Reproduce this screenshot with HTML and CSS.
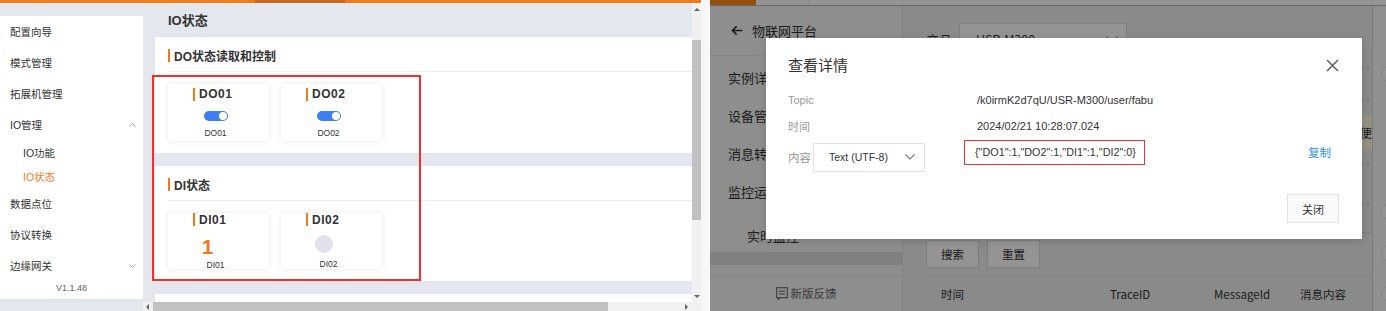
FILE: index.html
```html
<!DOCTYPE html>
<html lang="zh-CN">
<head>
    <meta charset="UTF-8">
    <meta name="viewport" content="width=device-width, initial-scale=1.0">
    <title>IO状态 / 查看详情</title>
    <link rel="stylesheet" href="styles.css">
</head>
<body>
<div class="screen">

    <!-- device web page -->
    <section class="device">
        <div class="device-top"></div>
        <div class="device-body">
            <nav class="device-menu">
                <div class="menu-item">配置向导</div>
                <div class="menu-item">模式管理</div>
                <div class="menu-item">拓展机管理</div>
                <div class="menu-item">IO管理
                    <svg class="caret" width="7" height="4" viewBox="0 0 7 4"><path d="M0.5 3.5L3.5 0.6l3 2.9" fill="none" stroke="#999" stroke-width="0.9"/></svg>
                </div>
                <div class="menu-sub">IO功能</div>
                <div class="menu-sub active">IO状态</div>
                <div class="menu-item">数据点位</div>
                <div class="menu-item">协议转换</div>
                <div class="menu-item">边缘网关
                    <svg class="caret" width="7" height="4" viewBox="0 0 7 4"><path d="M0.5 0.5L3.5 3.4l3-2.9" fill="none" stroke="#999" stroke-width="0.9"/></svg>
                </div>
                <div class="version">V1.1.48</div>
            </nav>

            <div class="device-main">
                <div class="device-view">
                    <div class="device-content">
                        <h2 class="page-title">IO状态</h2>

                        <div class="panel">
                            <div class="panel-head">DO状态读取和控制</div>
                            <div class="io-row">
                                <div class="io-card">
                                    <div class="io-name">DO01</div>
                                    <span class="switch"><span class="knob"></span></span>
                                    <div class="io-label">DO01</div>
                                </div>
                                <div class="io-card">
                                    <div class="io-name">DO02</div>
                                    <span class="switch"><span class="knob"></span></span>
                                    <div class="io-label">DO02</div>
                                </div>
                            </div>
                        </div>

                        <div class="panel">
                            <div class="panel-head">DI状态</div>
                            <div class="io-row">
                                <div class="io-card di">
                                    <div class="io-name">DI01</div>
                                    <div class="io-value"><span class="io-num">1</span></div>
                                    <div class="io-label">DI01</div>
                                </div>
                                <div class="io-card di">
                                    <div class="io-name">DI02</div>
                                    <div class="io-value"><span class="dot"></span></div>
                                    <div class="io-label">DI02</div>
                                </div>
                            </div>
                        </div>

                        <div class="panel filler"></div>
                    </div>
                    <div class="vscroll">
                        <span class="tri up"></span>
                        <span class="vthumb"></span>
                        <span class="tri down"></span>
                    </div>
                </div>
                <div class="hscroll">
                    <span class="tri left"></span>
                    <span class="hthumb"></span>
                    <span class="tri right"></span>
                </div>
            </div>
        </div>
        <div class="mark"></div>
    </section>

    <div class="seam"></div>

    <!-- cloud platform with detail dialog -->
    <section class="cloud">
        <div class="cloud-top"><span class="brand"></span><span class="tab"></span></div>
        <div class="cloud-body">
            <aside class="cloud-aside">
                <div class="aside-head">
                    <svg width="12" height="11" viewBox="0 0 12 11"><path d="M11.5 5.5H1.8M5.6 1.4L1.5 5.5l4.1 4.1" fill="none" stroke="#333" stroke-width="1.7"/></svg>
                    <span>物联网平台</span>
                </div>
                <div class="aside-menu">
                    <div class="aside-item">实例详情</div>
                    <div class="aside-item">设备管理</div>
                    <div class="aside-item">消息转发</div>
                    <div class="aside-item">监控运维</div>
                    <div class="aside-item sub">实时监控</div>
                </div>
                <div class="aside-band"></div>
                <div class="aside-foot">
                    <svg width="12" height="13" viewBox="0 0 12 13"><rect x="0.7" y="0.7" width="10.6" height="10" fill="none" stroke="#666" stroke-width="1.1"/><path d="M3 4.2h6M3 7h6M2 10.7v1.8l2-1.8" fill="none" stroke="#666" stroke-width="1.1"/></svg>
                    <span>新版反馈</span>
                </div>
            </aside>

            <div class="cloud-main">
                <div class="filter">
                    <span class="filter-label">产品:</span>
                    <div class="filter-select">
                        <span>USR-M300</span>
                        <svg width="12" height="7" viewBox="0 0 12 7"><path d="M0.5 0.5L6 6l5.5-5.5" fill="none" stroke="#888" stroke-width="1.2"/></svg>
                    </div>
                </div>
                <div class="sheet">
                    <div class="sheet-row r1"></div>
                    <div class="sheet-row r2"></div>
                    <div class="sheet-row r3"><div class="tip">以便</div></div>
                    <div class="sheet-row r4"></div>
                    <div class="sheet-row r5"></div>
                </div>
                <div class="actions">
                    <button class="btn">搜索</button>
                    <button class="btn">重置</button>
                </div>
                <div class="table-head">
                    <span>时间</span>
                    <span>TraceID</span>
                    <span>MessageId</span>
                    <span>消息内容</span>
                </div>
            </div>

            <div class="cloud-edge">
                <span class="float-btn first"></span>
                <span class="float-btn"></span>
                <span class="float-btn"></span>
                <span class="float-btn"></span>
            </div>
        </div>

        <div class="mask"></div>

        <div class="dialog">
            <div class="dialog-head">
                <h3 class="dialog-title">查看详情</h3>
                <svg class="dialog-close" width="13" height="13" viewBox="0 0 13 13"><path d="M1 1l11 11M12 1L1 12" stroke="#666" stroke-width="1.6"/></svg>
            </div>
            <div class="detail-row">
                <span class="detail-label">Topic</span>
                <span>/k0irmK2d7qU/USR-M300/user/fabu</span>
            </div>
            <div class="detail-row">
                <span class="detail-label">时间</span>
                <span>2024/02/21 10:28:07.024</span>
            </div>
            <div class="detail-row content">
                <span class="detail-label short">内容</span>
                <div class="codec">
                    <span>Text (UTF-8)</span>
                    <svg width="10" height="6" viewBox="0 0 10 6"><path d="M0.5 0.5L5 5l4.5-4.5" fill="none" stroke="#777" stroke-width="1.1"/></svg>
                </div>
                <span class="payload">{"DO1":1,"DO2":1,"DI1":1,"DI2":0}</span>
                <a class="copy">复制</a>
            </div>
            <div class="dialog-foot">
                <button class="btn-close">关闭</button>
            </div>
        </div>
    </section>

</div>
</body>
</html>
```

FILE: styles.css
```css
* {
    box-sizing: border-box;
}
body {
    margin: 0;
    width: 1386px;
    height: 311px;
    overflow: hidden;
    background: #f7f7f7;
}
.screen {
    display: flex;
    height: 311px;
}

/* ---------- device page ---------- */
.device {
    position: relative;
    width: 701px;
    height: 311px;
    background: #e4e7ee;
    font-family: "Liberation Sans", "Noto Sans CJK SC", sans-serif;
    color: #333;
}
.device-top {
    height: 3px;
    background: linear-gradient(to right, #f07b1f 255px, #c4691f 255px, #c4691f 345px, #f07b1f 345px);
}
.device-body {
    display: flex;
    height: 308px;
}
.device-menu {
    width: 143px;
    height: 283px;
    margin-top: 13px;
    background: #fff;
    display: flex;
    flex-direction: column;
    font-size: 10.5px;
}
.menu-item {
    height: 31px;
    display: flex;
    align-items: center;
    justify-content: space-between;
    padding: 0 7px 0 10px;
}
.menu-sub {
    height: 24px;
    display: flex;
    align-items: center;
    padding-left: 23px;
}
.menu-sub.active {
    color: #f07b1f;
}
.version {
    line-height: 14px;
    text-align: center;
    font-size: 9px;
    color: #666;
}

.device-main {
    width: 558px;
    display: flex;
    flex-direction: column;
}
.device-view {
    height: 299px;
    display: flex;
}
.device-content {
    flex: 1;
    overflow: hidden;
    padding-left: 12px;
}
.page-title {
    margin: 0;
    height: 34px;
    padding: 2px 0 0 13px;
    font-size: 13px;
    font-weight: bold;
    line-height: 32px;
}
.panel {
    background: #fff;
    margin-bottom: 13px;
}
.panel.filler {
    height: 20px;
}
.panel-head {
    margin-left: 13px;
    height: 35px;
    padding-top: 3px;
    border-bottom: 1px solid #eeeeee;
    display: flex;
    align-items: center;
    font-size: 12px;
    font-weight: bold;
}
.panel-head::before,
.io-name::before {
    content: "";
    width: 2px;
    height: 13px;
    margin-right: 4px;
    background: #f07b1f;
}
.io-row {
    display: flex;
    gap: 12px;
    padding: 12px 0 12px 13px;
}
.io-card {
    width: 101px;
    height: 57px;
    background: #fff;
    box-shadow: 0 0 6px rgba(0, 0, 0, 0.09);
    display: flex;
    flex-direction: column;
    align-items: center;
    padding-right: 6px;
}
.io-card.di {
    height: 56px;
}
.io-name {
    align-self: flex-start;
    margin: 3px 0 0 25px;
    display: flex;
    align-items: center;
    line-height: 14px;
    font-size: 12px;
    font-weight: bold;
    letter-spacing: 0.5px;
}
.io-card.di .io-name {
    margin-top: 0;
    line-height: 12px;
}
.switch {
    width: 24px;
    height: 10px;
    margin-top: 10px;
    padding: 1px;
    border-radius: 5px;
    background: #3f7ff4;
    display: flex;
    justify-content: flex-end;
}
.knob {
    width: 8px;
    height: 8px;
    border-radius: 50%;
    background: #fff;
}
.io-label {
    margin-top: 7px;
    font-size: 8.5px;
    line-height: 10px;
}
.io-card.di .io-label {
    margin-top: 3px;
}
.io-value {
    height: 20px;
    margin-top: 11px;
    display: flex;
    justify-content: center;
}
.io-num {
    margin-right: 16px;
    font-size: 21px;
    line-height: 20px;
    font-weight: bold;
    color: #f07b1f;
}
.dot {
    width: 18px;
    height: 18px;
    margin: -2px 9px 0 0;
    border-radius: 50%;
    background: #e1e1eb;
}

.vscroll {
    width: 9px;
    background: #f1f1f1;
    display: flex;
    flex-direction: column;
    align-items: center;
}
.vthumb {
    width: 9px;
    height: 180px;
    margin-top: 29px;
    background: #c1c1c1;
}
.hscroll {
    height: 9px;
    background: #f1f1f1;
    display: flex;
    align-items: center;
    padding-left: 3px;
}
.hthumb {
    width: 455px;
    height: 9px;
    margin-left: 4px;
    background: #c1c1c1;
}
.tri {
    width: 0;
    height: 0;
    border: 3px solid transparent;
}
.tri.up {
    margin-top: 5px;
    border-top-width: 0;
    border-bottom-color: #666;
}
.tri.down {
    margin-top: auto;
    margin-bottom: 4px;
    border-bottom-width: 0;
    border-top-color: #666;
}
.tri.left {
    border-left-width: 0;
    border-right-color: #666;
}
.tri.right {
    margin-left: 77px;
    border-right-width: 0;
    border-left-color: #666;
}
.mark {
    position: absolute;
    left: 152px;
    top: 75px;
    width: 269px;
    height: 206px;
    border: 2px solid #f62d2d;
}

.seam {
    width: 9px;
    background: #f7f7f7;
}

/* ---------- cloud page ---------- */
.cloud {
    position: relative;
    width: 676px;
    height: 311px;
    overflow: hidden;
    background: #eeeeee;
    font-family: "Noto Sans CJK SC", sans-serif;
    color: #333;
}
.cloud-top {
    height: 6px;
    display: flex;
    background: #fff;
    border-bottom: 1px solid #b5b5b5;
}
.brand {
    width: 46px;
    background: #ff8a1c;
}
.tab {
    width: 54px;
    border-right: 1px solid #e6e6e6;
}
.cloud-body {
    display: flex;
    height: 305px;
}
.cloud-aside {
    width: 193px;
    background: #f4f4f4;
    border-right: 1px solid #e2e2e2;
    display: flex;
    flex-direction: column;
}
.aside-head {
    height: 53px;
    padding-left: 21px;
    border-bottom: 1px solid #e6e6e6;
    display: flex;
    align-items: center;
    gap: 9px;
    font-size: 13px;
}
.aside-menu {
    padding-top: 3px;
    font-size: 13px;
}
.aside-item {
    height: 38px;
    line-height: 38px;
    padding-left: 18px;
    white-space: nowrap;
}
.aside-item.sub {
    height: 44px;
    padding: 6px 0 0 37px;
}
.aside-band {
    height: 13px;
    margin-top: -3px;
    background: #dcdcdc;
}
.aside-foot {
    margin-top: 10px;
    height: 38px;
    border-top: 1px solid #e2e2e2;
    display: flex;
    align-items: center;
    justify-content: center;
    gap: 3px;
    font-size: 11.5px;
    color: #666;
}

.cloud-main {
    width: 469px;
    padding: 17px 0 0 23px;
    display: flex;
    flex-direction: column;
}
.filter {
    height: 32px;
    display: flex;
    align-items: center;
    font-size: 13px;
}
.filter-label {
    width: 33px;
}
.filter-select {
    width: 168px;
    height: 32px;
    padding: 0 8px 0 16px;
    border: 1px solid #d9d9d9;
    background: #fff;
    display: flex;
    align-items: center;
    justify-content: space-between;
    font-size: 12.5px;
}
.sheet-row {
    border-bottom: 1px solid #d6d6d6;
}
.sheet-row.r1 { height: 14px; }
.sheet-row.r2 { height: 32px; }
.sheet-row.r3 { height: 63px; padding-top: 15px; }
.sheet-row.r4 { height: 40px; }
.sheet-row.r5 { height: 29px; }
.tip {
    height: 34px;
    line-height: 34px;
    background: #fff8e1;
    text-align: right;
    white-space: nowrap;
    overflow: hidden;
    font-size: 12.5px;
}
.actions {
    margin-top: 7px;
    display: flex;
    gap: 8px;
}
.btn {
    width: 53px;
    height: 28px;
    border: 1px solid #d9d9d9;
    background: #fff;
    font-family: inherit;
    font-size: 11.5px;
    color: #333;
    padding: 0;
}
.table-head {
    margin-top: 8px;
    height: 34px;
    border-top: 1px solid #dedede;
    padding-left: 15px;
    display: grid;
    grid-template-columns: 169px 104px 86px 1fr;
    align-items: center;
    font-size: 11.5px;
}
.cloud-edge {
    width: 14px;
    background: #f8f8f8;
    border-left: 1px solid #d4d4d4;
    display: flex;
    flex-direction: column;
    padding-left: 8px;
}
.float-btn {
    width: 16px;
    height: 16px;
    border-radius: 50%;
    background: #fdfdfd;
    border: 1px solid #e2e2e2;
    margin-top: 25px;
}
.float-btn.first {
    margin-top: 60px;
    margin-bottom: 97px;
}

.mask {
    position: absolute;
    inset: 0;
    background: rgba(0, 0, 0, 0.42);
}
.dialog {
    position: absolute;
    left: 56px;
    top: 38px;
    width: 596px;
    height: 201px;
    padding: 0 23px 0 22px;
    background: #fff;
    box-shadow: 0 2px 8px rgba(0, 0, 0, 0.15);
    font-family: "Liberation Sans", "Noto Sans CJK SC", sans-serif;
    font-size: 11px;
}
.dialog-head {
    height: 49px;
    padding-top: 16px;
    display: flex;
    justify-content: space-between;
    align-items: flex-start;
    font-family: "Noto Sans CJK SC", sans-serif;
}
.dialog-title {
    margin: 0;
    font-size: 15px;
    font-weight: normal;
    line-height: 22px;
}
.dialog-close {
    margin-top: 5px;
}
.detail-row {
    height: 26px;
    display: flex;
    align-items: center;
}
.detail-label {
    width: 189px;
    color: #999;
}
.detail-row.content {
    height: 36px;
}
.detail-label.short {
    width: auto;
    margin-right: 2px;
    font-size: 11.5px;
}
.codec {
    width: 112px;
    height: 29px;
    padding: 0 9px 0 15px;
    border: 1px solid #e2e2e2;
    display: flex;
    align-items: center;
    justify-content: space-between;
    font-size: 10.5px;
}
.payload {
    align-self: flex-start;
    margin: 1px 0 0 39px;
    height: 25px;
    padding: 0 8px 0 10px;
    line-height: 22px;
    font-size: 10.8px;
    border: 1.5px solid #f62d2d;
}
.copy {
    align-self: flex-start;
    margin: 1px 8px 0 auto;
    line-height: 26px;
    font-size: 11.5px;
    color: #2d8cf0;
}
.dialog-foot {
    margin-top: 19px;
    display: flex;
    justify-content: flex-end;
}
.btn-close {
    width: 52px;
    height: 29px;
    padding: 0;
    border: 1px solid #e2e2e2;
    background: #fafafa;
    font-family: inherit;
    font-size: 11px;
    color: #333;
}
```
